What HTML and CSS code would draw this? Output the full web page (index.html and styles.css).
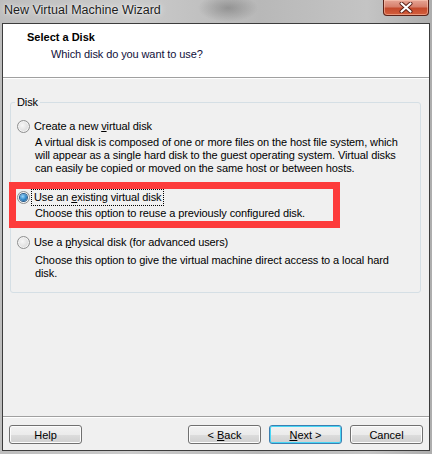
FILE: index.html
```html
<!DOCTYPE html>
<html>
<head>
  <title>New Virtual Machine Wizard</title>
  <link rel="stylesheet" href="styles.css">
</head>
<body>
  <div class="window">
    <div class="titlebar">
      <span class="title">New Virtual Machine Wizard</span>
      <button class="close-button" title="Close">
        <svg width="14" height="11" viewBox="0 0 14 11">
          <path d="M2.5 1.5 L11.5 9.5 M11.5 1.5 L2.5 9.5" stroke="#5a1e14" stroke-width="4" stroke-linecap="round"/>
          <path d="M2.5 1.5 L11.5 9.5 M11.5 1.5 L2.5 9.5" stroke="#ffffff" stroke-width="2.2" stroke-linecap="round"/>
        </svg>
      </button>
    </div>

    <div class="client">
      <div class="header">
        <div class="header-title">Select a Disk</div>
        <div class="header-sub">Which disk do you want to use?</div>
      </div>

      <div class="body">
        <fieldset class="group">
          <legend>Disk</legend>

          <div class="option">
            <div class="option-row">
              <span class="radio"></span>
              <span class="option-label">Create a new <u>v</u>irtual disk</span>
            </div>
            <p class="desc">A virtual disk is composed of one or more files on the host file system, which<br>will appear as a single hard disk to the guest operating system. Virtual disks<br>can easily be copied or moved on the same host or between hosts.</p>
          </div>

          <div class="option">
            <div class="option-row">
              <span class="radio checked"></span>
              <span class="option-label focused">Use an <u>e</u>xisting virtual disk</span>
            </div>
            <p class="desc">Choose this option to reuse a previously configured disk.</p>
          </div>

          <div class="option">
            <div class="option-row">
              <span class="radio"></span>
              <span class="option-label">Use a <u>p</u>hysical disk (for advanced users)</span>
            </div>
            <p class="desc">Choose this option to give the virtual machine direct access to a local hard<br>disk.</p>
          </div>
        </fieldset>
      </div>

      <div class="footer">
        <button class="btn">Help</button>
        <span class="spacer"></span>
        <button class="btn">&lt; <u>B</u>ack</button>
        <button class="btn default"><u>N</u>ext &gt;</button>
        <button class="btn">Cancel</button>
      </div>
    </div>

    <!-- annotation drawn over the screenshot -->
    <div class="highlight"></div>
  </div>
</body>
</html>
```

FILE: styles.css
```css
* {
  margin: 0;
  padding: 0;
  box-sizing: border-box;
}

html, body {
  width: 432px;
  height: 454px;
  overflow: hidden;
}

body {
  font-family: 'Liberation Sans', Arial, sans-serif;
  font-size: 11px;
  letter-spacing: -0.1px;
  color: #000;
}

.window {
  position: relative;
  width: 432px;
  height: 454px;
  display: flex;
  flex-direction: column;
  padding: 0 2px 3px 2px;
  background:
    radial-gradient(ellipse 30px 14px at 228px 8px, rgba(70, 70, 70, 0.35), transparent),
    linear-gradient(to right, #bdbdbd, #cbcbcb 30%, #b8b8b8 60%, #c4c4c4 85%, #adadad);
}

/* Title bar */
.titlebar {
  flex: 0 0 23px;
  display: flex;
  align-items: flex-start;
}

.title {
  font-size: 12.5px;
  letter-spacing: 0;
  line-height: 18px;
  padding: 1px 0 0 2px;
  color: #1c1c1c;
  text-shadow: 0 0 6px rgba(255, 255, 255, 0.9), 0 0 2px rgba(255, 255, 255, 0.8);
}

.close-button {
  margin-left: auto;
  margin-right: 1px;
  width: 46px;
  height: 16px;
  border: 1px solid #5b2218;
  border-top: none;
  border-radius: 0 0 4px 4px;
  background: linear-gradient(to bottom, #e6a595 0%, #d7806c 45%, #c44a2c 55%, #d45e3c 100%);
  box-shadow: inset 0 0 0 1px rgba(255, 210, 190, 0.5);
  display: flex;
  align-items: center;
  justify-content: center;
}

/* Client area */
.client {
  flex: 1;
  display: flex;
  flex-direction: column;
  background: #f0f0f0;
  border: 1px solid #3c3c3c;
  min-height: 0;
}

.header {
  flex: 0 0 54px;
  background: #fff;
  border-bottom: 1px solid #a0a0a0;
  padding: 7px 0 0 24px;
}

.header-title {
  font-weight: bold;
  letter-spacing: 0;
  line-height: 13px;
}

.header-sub {
  line-height: 13px;
  margin-top: 4px;
  padding-left: 24px;
  color: #10103a;
}

.body {
  flex: 1;
  padding: 17px 8px 0 7px;
  border-top: 1px solid #fff;
}

.group {
  border: 1px solid #d5dfe5;
  border-radius: 3px;
  padding: 10px 6px 12px 6px;
  height: 197px;
}

.group legend {
  margin-left: -2px;
  padding: 0 2px;
  line-height: 13px;
}

.option + .option {
  margin-top: 15px;
}

.option-row {
  display: flex;
  align-items: center;
  height: 15px;
}

.option-label {
  margin-left: 3px;
  padding: 0 1px;
  line-height: 13px;
  white-space: nowrap;
}

.option-label.focused {
  outline: 1px dotted #000;
  outline-offset: 1px;
}

.desc {
  margin-top: 2px;
  padding-left: 18px;
  line-height: 13px;
  white-space: nowrap;
}

.option:last-child .desc {
  margin-top: 4px;
}

/* Radio buttons */
.radio {
  position: relative;
  flex: 0 0 13px;
  width: 13px;
  height: 13px;
  border-radius: 50%;
  border: 1px solid #8e8f8f;
  background: radial-gradient(circle at 40% 40%, #f7f7f7, #dcdcdc 70%, #cfcfcf);
  box-shadow: inset 0 0 0 1px #f4f4f4;
}

.radio.checked::after {
  content: '';
  position: absolute;
  top: 2px;
  left: 2px;
  width: 7px;
  height: 7px;
  border-radius: 50%;
  background: radial-gradient(circle at 40% 35%, #9ad6fb, #2d86c8 55%, #14508a);
  box-shadow: 0 0 0 1px #2a5d8c;
}

/* Footer buttons */
.footer {
  flex: 0 0 34px;
  display: flex;
  align-items: flex-start;
  gap: 8px;
  padding: 8px 6px 0 6px;
  border-top: 1px solid #a0a0a0;
  box-shadow: inset 0 1px 0 #fff;
}

.spacer {
  flex: 1;
}

.btn {
  width: 73px;
  height: 19px;
  font-family: inherit;
  font-size: 11px;
  letter-spacing: 0;
  color: #000;
  border: 1px solid #707070;
  border-radius: 3px;
  background: linear-gradient(to bottom, #f2f2f2 0%, #ebebeb 50%, #dddddd 51%, #cfcfcf 100%);
  box-shadow: inset 0 0 0 1px #fcfcfc;
  line-height: 16px;
}

.btn.default {
  border-color: #3c7fb1;
  box-shadow: inset 0 0 0 1px #48d6f5;
}

/* Red annotation box */
.highlight {
  position: absolute;
  left: 9px;
  top: 182px;
  width: 331px;
  height: 46px;
  border: 7px solid #fd3b3b;
  pointer-events: none;
}
```
